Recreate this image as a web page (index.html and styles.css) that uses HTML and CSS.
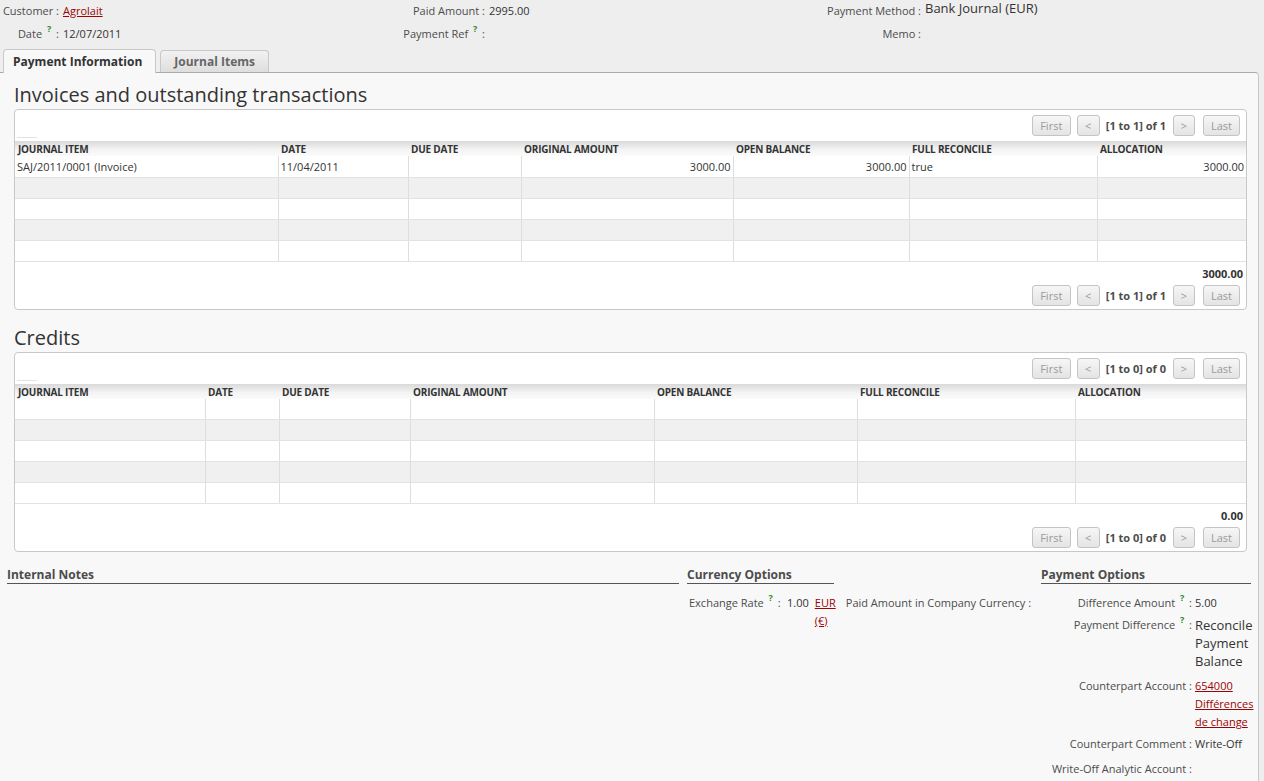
FILE: index.html
```html
<!DOCTYPE html>
<html lang="en">
<head>
    <meta charset="UTF-8">
    <title>Supplier Payment</title>
    <link rel="stylesheet" href="styles.css">
</head>
<body>

    <div class="head-form">
        <div class="lbl">Customer :</div>
        <div class="val"><a href="#">Agrolait</a></div>
        <div class="lbl">Paid Amount :</div>
        <div class="val">2995.00</div>
        <div class="lbl">Payment Method :</div>
        <div class="val big">Bank Journal (EUR)</div>

        <div class="lbl">Date <sup class="help">?</sup> :</div>
        <div class="val">12/07/2011</div>
        <div class="lbl">Payment Ref <sup class="help">?</sup> :</div>
        <div class="val"></div>
        <div class="lbl">Memo :</div>
        <div class="val"></div>
    </div>

    <ul class="tabs">
        <li class="tab active">Payment Information</li>
        <li class="tab">Journal Items</li>
    </ul>

    <div class="panel">
        <h2 class="section-title">Invoices and outstanding transactions</h2>
        <div class="list-box">
            <div class="pager">
                <span class="pg-btn first">First</span>
                <span class="pg-btn prev">&lt;</span>
                <span class="pg-text">[1 to 1] of 1</span>
                <span class="pg-btn next">&gt;</span>
                <span class="pg-btn last">Last</span>
            </div>
            <div class="select-tick"></div>
            <table class="grid inv">
                <colgroup><col><col><col><col><col><col><col></colgroup>
                <thead>
                    <tr><th>Journal Item</th><th>Date</th><th>Due Date</th><th>Original Amount</th><th>Open Balance</th><th>Full Reconcile</th><th>Allocation</th></tr>
                </thead>
                <tbody>
                    <tr class="first-row"><td>SAJ/2011/0001 (Invoice)</td><td>11/04/2011</td><td></td><td class="num">3000.00</td><td class="num">3000.00</td><td>true</td><td class="num">3000.00</td></tr>
                    <tr><td></td><td></td><td></td><td></td><td></td><td></td><td></td></tr>
                    <tr><td></td><td></td><td></td><td></td><td></td><td></td><td></td></tr>
                    <tr><td></td><td></td><td></td><td></td><td></td><td></td><td></td></tr>
                    <tr><td></td><td></td><td></td><td></td><td></td><td></td><td></td></tr>
                </tbody>
            </table>
            <div class="total">3000.00</div>
            <div class="pager">
                <span class="pg-btn first">First</span>
                <span class="pg-btn prev">&lt;</span>
                <span class="pg-text">[1 to 1] of 1</span>
                <span class="pg-btn next">&gt;</span>
                <span class="pg-btn last">Last</span>
            </div>
        </div>

        <h2 class="section-title">Credits</h2>
        <div class="list-box">
            <div class="pager">
                <span class="pg-btn first">First</span>
                <span class="pg-btn prev">&lt;</span>
                <span class="pg-text">[1 to 0] of 0</span>
                <span class="pg-btn next">&gt;</span>
                <span class="pg-btn last">Last</span>
            </div>
            <div class="select-tick"></div>
            <table class="grid cred">
                <colgroup><col><col><col><col><col><col><col></colgroup>
                <thead>
                    <tr><th>Journal Item</th><th>Date</th><th>Due Date</th><th>Original Amount</th><th>Open Balance</th><th>Full Reconcile</th><th>Allocation</th></tr>
                </thead>
                <tbody>
                    <tr><td></td><td></td><td></td><td></td><td></td><td></td><td></td></tr>
                    <tr><td></td><td></td><td></td><td></td><td></td><td></td><td></td></tr>
                    <tr><td></td><td></td><td></td><td></td><td></td><td></td><td></td></tr>
                    <tr><td></td><td></td><td></td><td></td><td></td><td></td><td></td></tr>
                    <tr><td></td><td></td><td></td><td></td><td></td><td></td><td></td></tr>
                </tbody>
            </table>
            <div class="total">0.00</div>
            <div class="pager">
                <span class="pg-btn first">First</span>
                <span class="pg-btn prev">&lt;</span>
                <span class="pg-text">[1 to 0] of 0</span>
                <span class="pg-btn next">&gt;</span>
                <span class="pg-btn last">Last</span>
            </div>
        </div>

        <div class="groups">
            <div class="group notes">
                <div class="separator">Internal Notes</div>
            </div>

            <div class="group currency">
                <div class="separator short">Currency Options</div>
                <div class="cur-row">
                    <div class="f-lbl rate">Exchange Rate <sup class="help">?</sup> :</div>
                    <div class="f-val">1.00</div>
                    <div class="f-cur"><a href="#">EUR (€)</a></div>
                    <div class="f-lbl">Paid Amount in Company Currency :</div>
                </div>
            </div>

            <div class="group payment">
                <div class="separator">Payment Options</div>
                <div class="fields">
                    <div class="f-lbl">Difference Amount <sup class="help">?</sup> :</div>
                    <div class="f-val">5.00</div>

                    <div class="f-lbl">Payment Difference <sup class="help">?</sup> :</div>
                    <div class="f-val big">Reconcile Payment Balance</div>

                    <div class="f-lbl m2o">Counterpart Account :</div>
                    <div class="f-val m2o"><a href="#">654000 Différences de change</a></div>

                    <div class="f-lbl">Counterpart Comment :</div>
                    <div class="f-val">Write-Off</div>

                    <div class="f-lbl m2o">Write-Off Analytic Account :</div>
                    <div class="f-val m2o"></div>
                </div>
            </div>
        </div>
    </div>

</body>
</html>
```

FILE: styles.css
```css
body {
    margin: 0;
    font-family: "Open Sans", "DejaVu Sans", sans-serif;
    font-size: 11px;
    color: #4c4c4c;
    background-color: #efeeee;
}

a {
    color: #9a0404;
    text-decoration: underline;
}

/* petit point d'aide vert */
.help {
    color: #2e8b2e;
    font-size: 9px;
    font-weight: bold;
    line-height: 0;
    vertical-align: 6px;
    margin: 0 2px;
}

/* en-tete du formulaire */
.head-form {
    display: grid;
    grid-template-columns: 61px 338px 88px 332px 104px 1fr;
    grid-auto-rows: 23px;
    height: 48px;
}

.head-form .lbl {
    text-align: right;
    padding-right: 2px;
    line-height: 22px;
    white-space: nowrap;
}

.head-form .val {
    padding-left: 2px;
    line-height: 22px;
    color: #333;
}

.head-form .val.big {
    font-size: 13px;
    line-height: 17px;
}

/* onglets */
.tabs {
    list-style: none;
    margin: 0;
    padding: 0 0 0 3px;
    display: flex;
    align-items: flex-end;
    gap: 4px;
    height: 24px;
    position: relative;
    z-index: 1;
}

.tab {
    height: 21px;
    line-height: 21px;
    padding: 0 13px;
    font-size: 12px;
    font-weight: bold;
    color: #666;
    border: 1px solid #c8c8c8;
    border-bottom: none;
    border-radius: 4px 4px 0 0;
    background: linear-gradient(to bottom, #f2f2f2, #dedede);
}

.tab.active {
    height: 23px;
    line-height: 24px;
    padding: 0 13px 0 9px;
    color: #333;
    background: #f8f8f8;
    margin-bottom: -1px;
}

.panel {
    background: #f8f8f8;
    border-top: 1px solid #acacac;
    border-right: 1px solid #c8c8c8;
    border-top-right-radius: 4px;
    margin-right: 5px;
    padding-bottom: 20px;
}

.section-title {
    margin: 10px 0 2px 14px;
    font-size: 20px;
    font-weight: normal;
    line-height: 24px;
    color: #333;
}

.list-box {
    margin: 0 11px 0 14px;
    background: white;
    border: 1px solid #c8c8c8;
    border-radius: 4px;
    padding: 5px 0 3px;
}

.list-box + .section-title {
    margin-top: 16px;
}

/* pagination */
.pager {
    display: flex;
    justify-content: flex-end;
    align-items: center;
    height: 21px;
    padding-right: 6px;
}

.pg-btn {
    box-sizing: border-box;
    height: 21px;
    line-height: 19px;
    text-align: center;
    color: #9a9a9a;
    border: 1px solid #c4c4c4;
    border-radius: 3px;
    background: linear-gradient(to bottom, #f6f6f6, #e4e4e4);
}

.pg-btn.first { width: 39px; }
.pg-btn.prev { width: 23px; margin-left: 6px; }
.pg-btn.next { width: 22px; margin-left: 7px; }
.pg-btn.last { width: 37px; margin-left: 8px; }

.pg-text {
    margin-left: 6px;
    font-weight: bold;
    color: #4c4c4c;
    white-space: nowrap;
}

.select-tick {
    width: 20px;
    margin: 1px 0 0 2px;
    border-top: 1px solid #e2e2e2;
    height: 3px;
}

/* grille des lignes */
.grid {
    width: 100%;
    table-layout: fixed;
    border-collapse: collapse;
}

.grid th {
    height: 15px;
    padding: 0 3px;
    text-align: left;
    font-size: 10px;
    font-weight: bold;
    text-transform: uppercase;
    color: #333;
    white-space: nowrap;
    background: linear-gradient(to bottom, #d9d9d9, #f3f3f3 55%, #fbfbfb);
    letter-spacing: -0.2px;
}

.grid td {
    height: 20px;
    padding: 0 2px;
    border-left: 1px solid #dedede;
    border-bottom: 1px solid #e2e2e2;
    color: #333;
    white-space: nowrap;
    overflow: hidden;
}

.grid td:first-child {
    border-left: none;
}

.grid tbody tr:nth-child(even) td {
    background: #f0f0f0;
}

.grid tr.first-row td {
    height: 21px;
}

.grid td.num {
    text-align: right;
}

.inv col:nth-child(1) { width: 263px; }
.inv col:nth-child(2) { width: 130px; }
.inv col:nth-child(3) { width: 113px; }
.inv col:nth-child(4) { width: 212px; }
.inv col:nth-child(5) { width: 176px; }
.inv col:nth-child(6) { width: 188px; }
.inv col:nth-child(7) { width: 149px; }

.cred col:nth-child(1) { width: 190px; }
.cred col:nth-child(2) { width: 74px; }
.cred col:nth-child(3) { width: 131px; }
.cred col:nth-child(4) { width: 244px; }
.cred col:nth-child(5) { width: 203px; }
.cred col:nth-child(6) { width: 218px; }
.cred col:nth-child(7) { width: 171px; }

.total {
    text-align: right;
    font-weight: bold;
    color: #333;
    padding: 5px 3px 4px 0;
    line-height: 14px;
}

/* groupes du bas */
.groups {
    display: flex;
    gap: 8px;
    padding: 15px 0 0 7px;
}

.group.notes { width: 672px; flex: none; }
.group.currency { width: 346px; flex: none; }
.group.payment { width: 210px; flex: none; }

.separator {
    font-size: 12px;
    font-weight: bold;
    color: #4c4c4c;
    line-height: 16px;
    border-bottom: 1px solid #555;
    margin-bottom: 10px;
}

.separator.short {
    width: 147px;
}

.cur-row {
    display: flex;
    align-items: flex-start;
    line-height: 18px;
}

.cur-row .f-lbl {
    padding-left: 2px;
    white-space: nowrap;
}

.cur-row .f-lbl.rate {
    width: 95px;
    flex: none;
}

.cur-row .f-val {
    padding-left: 3px;
    color: #333;
}

.cur-row .f-cur {
    width: 24px;
    margin-left: 6px;
    margin-right: 5px;
}

.fields {
    display: grid;
    grid-template-columns: 154px 60px;
    row-gap: 4px;
    line-height: 18px;
}

.fields .f-lbl {
    text-align: right;
    padding-right: 3px;
    white-space: nowrap;
}

.fields .m2o {
    padding-top: 3px;
}

.fields .f-val {
    color: #333;
}

.fields .f-val.big {
    font-size: 13px;
}
```
